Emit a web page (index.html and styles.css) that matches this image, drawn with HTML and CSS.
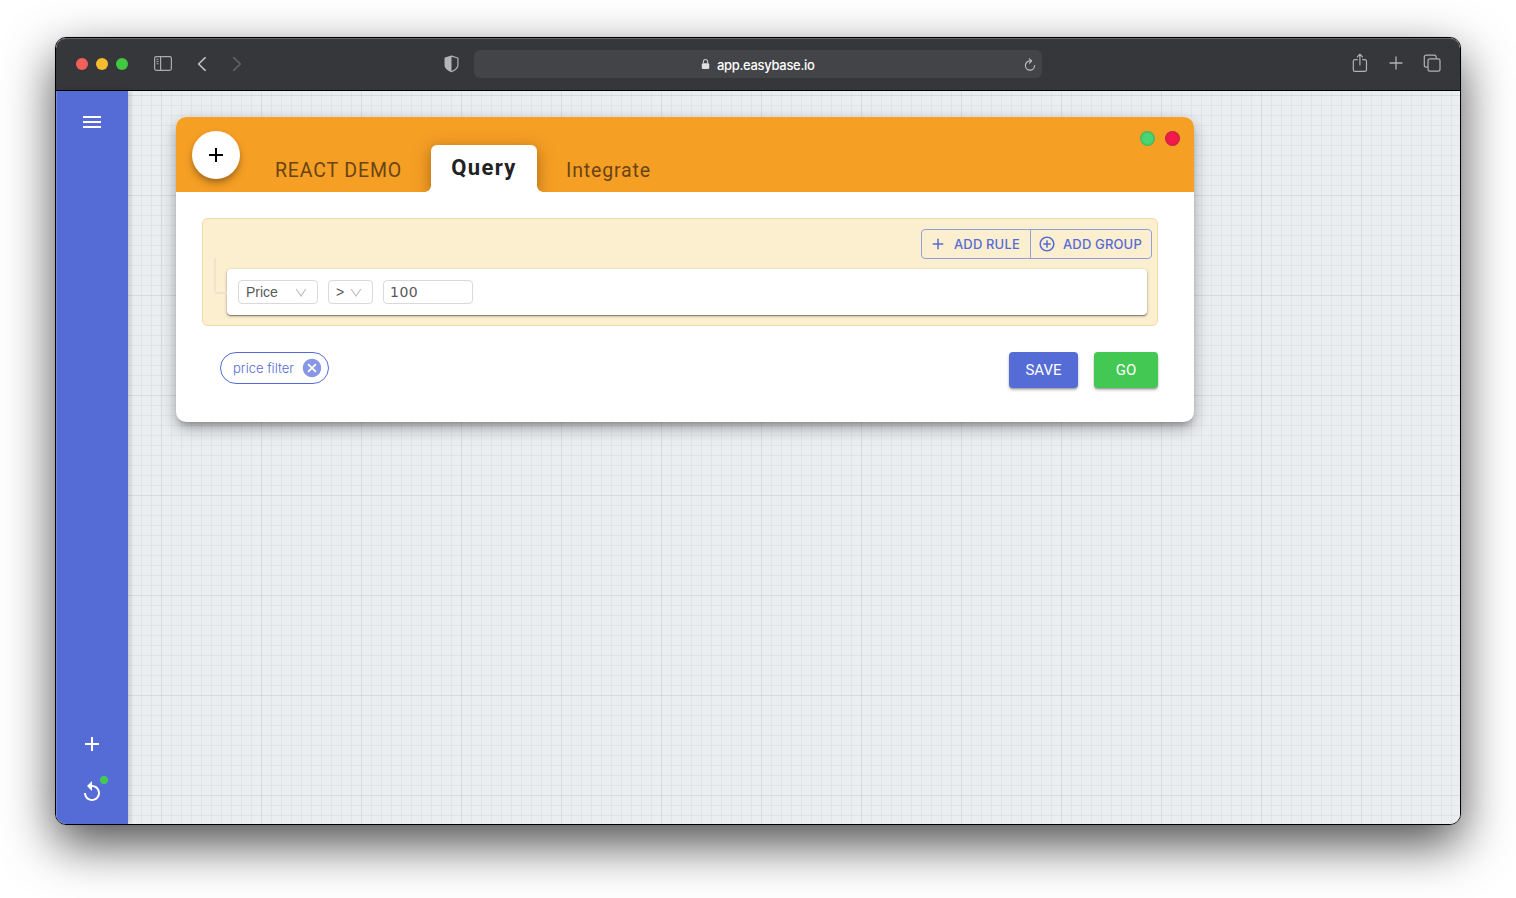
FILE: index.html
```html
<!DOCTYPE html>
<html lang="en">
<head>
<meta charset="utf-8">
<title>Easybase</title>
<link rel="stylesheet" href="styles.css">
</head>
<body>
<div class="window">
  <header class="toolbar">
    <div class="tb-left">
      <span class="light red"></span><span class="light yellow"></span><span class="light green"></span>
      <svg class="ic-side" width="20" height="18" viewBox="0 0 20 18" fill="none" stroke="#aaabad" stroke-width="1.2"><rect x="1.6" y="1.6" width="16.8" height="13.8" rx="1.8"/><path d="M7.6 1.5v14"/><path stroke-width="1" d="M3.5 4.3h2M3.5 6.5h2M3.5 8.7h2"/></svg>
      <svg class="ic-back" width="12" height="18" viewBox="0 0 12 18" fill="none" stroke="#c0c1c3" stroke-width="1.6" stroke-linecap="round" stroke-linejoin="round"><path d="M9.2 2.7 2.6 9l6.6 6.3"/></svg>
      <svg class="ic-fwd" width="12" height="18" viewBox="0 0 12 18" fill="none" stroke="#626366" stroke-width="1.6" stroke-linecap="round" stroke-linejoin="round"><path d="M2.7 2.7 9.3 9l-6.6 6.3"/></svg>
    </div>
    <svg class="ic-shield" width="16" height="18" viewBox="0 0 16 18"><path d="M8.5 1.2 14.9 3v7.3c0 2.8-3.2 5-6.4 6.4-3.2-1.4-6.4-3.6-6.4-6.4V3Z" fill="none" stroke="#b0b1b3" stroke-width="1.2" stroke-linejoin="round"/><path d="M8.5 1.2 2.1 3v7.3c0 2.8 3.2 5 6.4 6.4Z" fill="#b5b6b8"/></svg>
    <div class="address">
      <svg width="9" height="12" viewBox="0 0 9 12"><rect x=".8" y="5.3" width="7.4" height="5.7" rx="1" fill="#dedfe0"/><path d="M2.4 5.5V3.6a2.1 2.1 0 0 1 4.2 0v1.9" fill="none" stroke="#c6c7c8" stroke-width="1.1"/></svg>
      <span class="url">app.easybase.io</span>
      <svg class="ic-reload" width="14" height="14" viewBox="0 0 14 14" fill="none" stroke="#bfc0c2" stroke-width="1.1" stroke-linecap="round"><path d="M11.6 7.5a4.6 4.6 0 1 1-4.6-4.6h1.3"/><path d="M6.3.8 8.6 2.9 6.5 5.2" stroke-linejoin="round"/></svg>
    </div>
    <div class="tb-right">
      <svg width="16" height="20" viewBox="0 0 16 20" fill="none" stroke="#b1b2b4" stroke-width="1.2" stroke-linecap="round" stroke-linejoin="round"><path d="M5.3 6.6H3A1.7 1.7 0 0 0 1.3 8.3v8.4A1.7 1.7 0 0 0 3 18.4h9.8a1.7 1.7 0 0 0 1.7-1.7V8.3a1.7 1.7 0 0 0-1.7-1.7h-2.2M7.9 12V1.3M5.3 3.8l2.6-2.6 2.6 2.6"/></svg>
      <svg width="14" height="20" viewBox="0 0 14 20" stroke="#b1b2b4" stroke-width="1.3" stroke-linecap="round"><path d="M7 4v12M1 10h12"/></svg>
      <svg width="18" height="20" viewBox="0 0 18 20" fill="none" stroke="#b1b2b4" stroke-width="1.2"><path d="M4.8 14.2H3.2a1.9 1.9 0 0 1-1.9-1.9V4A1.9 1.9 0 0 1 3.2 2.1h8a1.9 1.9 0 0 1 1.900 1.900v1.600"/><rect x="5" y="5.9" width="12" height="12.3" rx="1.9"/></svg>
    </div>
  </header>
  <div class="app">
    <nav class="sidebar">
      <svg width="24" height="24" viewBox="0 0 24 24" fill="#fff"><path d="M3 18h18v-2H3v2zm0-5h18v-2H3v2zm0-7v2h18V6H3z"/></svg>
      <div class="side-bottom">
        <svg width="24" height="24" viewBox="0 0 24 24" fill="#fff"><path d="M19 13h-6v6h-2v-6H5v-2h6V5h2v6h6v2z"/></svg>
        <div class="replay">
          <svg width="24" height="24" viewBox="0 0 24 24" fill="#fff"><path d="M12 5V1L7 6l5 5V7c3.310 0 6 2.690 6 6s-2.690 6-6 6-6-2.690-6-6H4c0 4.420 3.580 8 8 8s8-3.580 8-8-3.580-8-8-8z"/></svg>
          <span class="status"></span>
        </div>
      </div>
    </nav>
    <main class="canvas">
      <section class="card">
        <div class="card-head">
          <button class="fab" aria-label="Add"><svg width="24" height="24" viewBox="0 0 24 24"><path d="M19 13h-6v6h-2v-6H5v-2h6V5h2v6h6v2z"/></svg></button>
          <div class="tab t-demo"><span>REACT DEMO</span></div>
          <div class="tab active"><span>Query</span></div>
          <div class="tab t-int"><span>Integrate</span></div>
          <div class="dots"><span class="dot g"></span><span class="dot r"></span></div>
        </div>
        <div class="card-body">
          <div class="builder">
            <div class="actions">
              <button class="act a1"><svg width="18" height="18" viewBox="0 0 24 24" fill="currentColor"><path d="M19 13h-6v6h-2v-6H5v-2h6V5h2v6h6v2z"/></svg><span>ADD RULE</span></button>
              <button class="act a2"><svg width="18" height="18" viewBox="0 0 24 24" fill="currentColor"><path d="M13 7h-2v4H7v2h4v4h2v-4h4v-2h-4V7zm-1-5C6.480 2 2 6.480 2 12s4.480 10 10 10 10-4.480 10-10S17.520 2 12 2zm0 18c-4.410 0-8-3.590-8-8s3.590-8 8-8 8 3.590 8 8-3.590 8-8 8z"/></svg><span>ADD GROUP</span></button>
            </div>
            <div class="rule">
              <div class="field price"><span>Price</span><svg width="12" height="12" viewBox="0 0 12 12" fill="none" stroke="#bcbcbc" stroke-width="1.1"><path d="M1.2 3 6 10l4.800-7"/></svg></div>
              <div class="field op"><span>&gt;</span><svg width="12" height="12" viewBox="0 0 12 12" fill="none" stroke="#bcbcbc" stroke-width="1.1"><path d="M1.2 3 6 10l4.800-7"/></svg></div>
              <div class="field num"><span>100</span></div>
            </div>
          </div>
          <div class="footer">
            <div class="chip"><span>price filter</span><svg width="22" height="22" viewBox="0 0 24 24" fill="#8797e3"><path d="M12 2C6.470 2 2 6.470 2 12s4.470 10 10 10 10-4.470 10-10S17.530 2 12 2zm5 13.590L15.590 17 12 13.410 8.410 17 7 15.590 10.590 12 7 8.410 8.410 7 12 10.590 15.590 7 17 8.410 13.410 12 17 15.590z"/></svg></div>
            <button class="btn save"><span>SAVE</span></button>
            <button class="btn go"><span>GO</span></button>
          </div>
        </div>
      </section>
    </main>
  </div>
</div>
</body>
</html>
```
FILE: styles.css
```css
* { box-sizing: border-box; }
html, body { height: 100%; }
body { margin: 0; padding: 37px 55px 0; background: #fff; overflow: hidden; font-family: Inter, "Liberation Sans", sans-serif; }
button { font: inherit; border: 0; padding: 0; background: none; }
svg { display: block; flex: none; }
span { white-space: nowrap; }

.window { width: 1406px; height: 788px; border: 1px solid #000; border-radius: 11px; overflow: hidden; display: flex; flex-direction: column; box-shadow: 0 19px 50px rgba(0,0,0,.7), 0 0 1px rgba(0,0,0,.3); }

.toolbar { height: 53px; flex: none; background: #36373a; border-bottom: 1px solid #000; box-shadow: inset 0 1px 0 #636467; border-radius: 10px 10px 0 0; display: flex; align-items: center; }
.tb-left { width: 387px; display: flex; align-items: center; padding-left: 20px; }
.light { width: 12px; height: 12px; border-radius: 50%; margin-right: 8px; }
.red { background: #f45f57; }
.yellow { background: #f7bb2e; }
.green { background: #3fc840; }
.ic-side { margin-left: 17px; }
.ic-back { margin-left: 23px; }
.ic-fwd { margin-left: 23px; }
.address { width: 568px; height: 28px; margin-left: 15px; border-radius: 6px; background: #434447; display: flex; align-items: center; padding-left: 227px; }
.url { margin: 1px 0 0 7px; color: #fff; font-size: 13px; font-weight: 500; letter-spacing: -.32px; }
.ic-reload { margin: 1px 5px 0 auto; }
.tb-right { display: flex; align-items: center; gap: 20.500px; margin-left: auto; padding: 0 19px 2px 0; }

.app { flex: 1; display: flex; min-height: 0; }
.sidebar { width: 72px; background: #556cd6; display: flex; flex-direction: column; align-items: center; justify-content: space-between; padding: 19px 0 20px; box-shadow: 1px 0 5px rgba(0,0,0,.22), inset 1px 0 0 #7185e2; position: relative; z-index: 1; }
.side-bottom { display: flex; flex-direction: column; gap: 24px; }
.replay { position: relative; }
.status { position: absolute; left: 20px; top: -4px; width: 8px; height: 8px; border-radius: 50%; background: #43c853; }
.canvas { flex: 1; padding: 26px 0 0 48px; background-color: #eaeef1;
  background-image: linear-gradient(rgba(0,0,0,.04) 1px, transparent 1px), linear-gradient(90deg, rgba(0,0,0,.04) 1px, transparent 1px), linear-gradient(rgba(0,0,0,.038) 1px, transparent 1px), linear-gradient(90deg, rgba(0,0,0,.038) 1px, transparent 1px);
  background-size: 100px 100px, 100px 100px, 10px 10px, 10px 10px;
  background-position: 33px 4px, 33px 4px, 3px 4px, 3px 4px; }

.card { width: 1018px; height: 305px; background: #fff; border-radius: 10px; box-shadow: 0 5px 6px -3px rgba(0,0,0,.25), 0 6px 16px rgba(0,0,0,.3); }
.card-head { height: 75px; border-radius: 10px 10px 0 0; background: #f69f25; display: flex; align-items: flex-end; padding-left: 16px; overflow: hidden; }
.fab { width: 48px; height: 48px; border-radius: 50%; background: #fff; align-self: flex-start; margin-top: 14px; display: flex; align-items: center; justify-content: center; box-shadow: 0 3px 5px -1px rgba(0,0,0,.22), 0 5px 10px rgba(0,0,0,.2); }
.tab { height: 43px; line-height: 43px; font-family: Roboto, sans-serif; color: #684413; font-size: 19.500px; }
.t-demo { width: 156px; margin-left: 35px; letter-spacing: .85px; }
.t-int { margin-left: 29px; letter-spacing: .85px; }
.active { position: relative; width: 106px; height: 47px; line-height: 45px; border-radius: 6px 6px 0 0; background: #fff; color: #222; font-size: 22px; font-weight: 700; text-align: center; letter-spacing: 1.4px; box-shadow: 0 4px 16px rgba(90,45,0,.5); }
.active::before, .active::after { content: ""; position: absolute; bottom: 0; width: 6px; height: 6px; }
.active::before { left: -6px; background: radial-gradient(circle at 0 0, transparent 5.500px, #fff 6px); }
.active::after { right: -6px; background: radial-gradient(circle at 100% 0, transparent 5.500px, #fff 6px); }
.dots { display: flex; gap: 10px; align-self: flex-start; margin: 14px 14px 0 auto; }
.dot { width: 15px; height: 15px; border-radius: 50%; box-shadow: inset 0 0 2px 1px rgba(50,80,40,.28); }
.g { background: #49d572; }
.r { background: #f4194a; }

.card-body { padding: 26px 36px 0 26px; }
.builder { height: 108px; border: 1px solid #f2ddaa; border-radius: 5px; background: #fcefcf; padding: 10px 5px 0 24px; }
.actions { width: 231px; height: 30px; margin-left: auto; border: 1px solid #91a0da; border-radius: 4px; display: flex; color: #556cd6; }
.act { display: flex; align-items: center; color: inherit; font-size: 13px; font-weight: 500; }
.act span { letter-spacing: .15px; }
.a1 { width: 109px; border-right: 1px solid #91a0da; padding-left: 7px; gap: 7px; }
.a2 { padding-left: 7px; gap: 7px; }
.rule { position: relative; width: 920px; height: 46px; margin-top: 10px; border-radius: 4px; background: #fff; box-shadow: 0 1px 3px rgba(0,0,0,.35), 0 1px 1px rgba(0,0,0,.3); display: flex; align-items: center; gap: 10px; padding-left: 11px; }
.rule::before { content: ""; position: absolute; left: -13px; top: -11px; width: 13px; height: 36px; border: 2px solid #f1e3c6; border-width: 0 0 2px 2px; border-radius: 0 0 0 4px; box-sizing: border-box; }
.field { height: 24px; border: 1px solid #d9d9d9; border-radius: 4px; display: flex; align-items: center; justify-content: space-between; padding: 0 10px 0 7px; color: #595959; font-family: "Liberation Sans", sans-serif; font-size: 14px; }
.price { width: 80px; }
.op { width: 45px; }
.num { width: 90px; padding-left: 6px; font-family: "DejaVu Sans", sans-serif; font-size: 14px; letter-spacing: .5px; }

.footer { display: flex; align-items: flex-start; margin-top: 26px; padding-left: 18px; }
.chip { width: 109px; height: 32px; border: 1px solid #556cd6; border-radius: 16px; display: flex; align-items: center; justify-content: space-between; padding: 0 5px 0 12px; color: #556cd6; font-size: 13px; font-weight: 300; margin-right: auto; }
.btn { height: 36px; border-radius: 4px; color: #fff; font-family: Roboto, sans-serif; font-size: 15px; text-align: center; box-shadow: 0 2px 3px rgba(0,0,0,.28), 0 1px 1px rgba(0,0,0,.15); }
.save { width: 69px; background: #556cd6; margin-right: 16px; }
.go { width: 64px; background: #43c853; }
```
